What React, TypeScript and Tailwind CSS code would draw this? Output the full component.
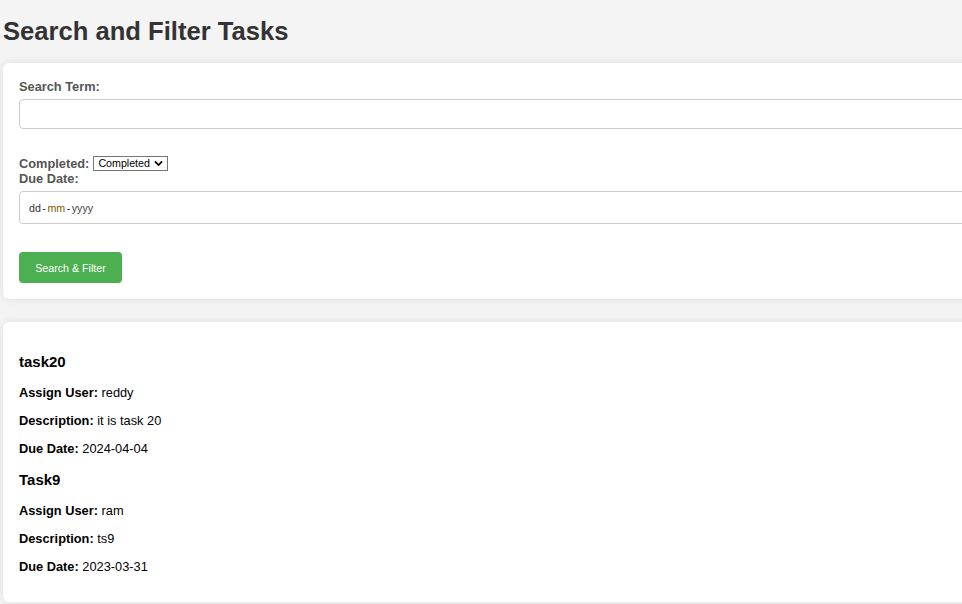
import * as React from "react";

type Task = {
  title: string;
  user: string;
  description: string;
  dueDate: string;
};

const tasks: Task[] = [
  { title: "task20", user: "reddy", description: "it is task 20", dueDate: "2024-04-04" },
  { title: "Task9", user: "ram", description: "ts9", dueDate: "2023-03-31" },
];

function ChevronDown({ className }: { className?: string }) {
  return (
    <svg viewBox="0 0 10 7" className={className} aria-hidden="true">
      <path d="M1 1.2 L5 5.2 L9 1.2" fill="none" stroke="currentColor" strokeWidth="1.9" />
    </svg>
  );
}

export default function App() {
  const [term, setTerm] = React.useState("");
  const [completed, setCompleted] = React.useState("true");

  return (
    <div className="min-h-screen overflow-hidden bg-[#f4f4f4] font-['Liberation_Sans',Arial,sans-serif]">
      <div className="w-[1100px] px-[3px]">
        {/* Title */}
        <h1 className="my-[17px] text-[25.6px] font-bold leading-[29.4px] text-[#333]">
          Search and Filter Tasks
        </h1>

        {/* Filter form card */}
        <form
          className="rounded-[6px] bg-white p-4 shadow-[0_0_8px_rgba(0,0,0,0.1)]"
          onSubmit={(e) => e.preventDefault()}
        >
          <label className="mb-[5px] block text-[12.8px] font-bold leading-[15px] text-[#555]">
            Search Term:
          </label>
          <input
            type="text"
            value={term}
            onChange={(e) => setTerm(e.target.value)}
            className="block h-[30px] w-full rounded-[4px] border border-[#ccc] bg-white px-2 text-[12.8px] outline-none"
          />

          <div className="mt-[26px] flex h-[16px] items-end gap-[4px]">
            <label className="text-[12.8px] font-bold leading-[15px] text-[#555]">Completed:</label>
            <span className="relative inline-flex">
              <select
                value={completed}
                onChange={(e) => setCompleted(e.target.value)}
                className="h-[15px] w-[75px] appearance-none border border-[#767676] bg-white pl-[4px] pr-[16px] text-[10.67px] leading-[13px] text-black"
              >
                <option value="true">Completed</option>
                <option value="false">Not Completed</option>
              </select>
              <ChevronDown className="pointer-events-none absolute right-[5px] top-[4px] h-[7px] w-[9px] text-black" />
            </span>
          </div>

          <label className="mb-[5px] block text-[12.8px] font-bold leading-[15px] text-[#555]">
            Due Date:
          </label>
          <div className="flex h-[33px] w-full items-center rounded-[4px] border border-[#ccc] bg-white pl-[9px] text-[10.67px] text-[#333]">
            <span>dd</span>
            <span className="px-[1.5px]">-</span>
            <span className="text-[#7a5a00]">mm</span>
            <span className="px-[1.5px]">-</span>
            <span className="text-[#444]">yyyy</span>
          </div>

          <button
            type="submit"
            className="mt-[28px] h-[31px] w-[103px] rounded-[4px] bg-[#4caf50] text-[10.67px] text-white"
          >
            Search &amp; Filter
          </button>
        </form>

        {/* Results card */}
        <div className="mt-[23px] rounded-[6px] bg-white px-4 py-4 text-black shadow-[0_0_8px_rgba(0,0,0,0.1)]">
          {tasks.map((t) => (
            <div key={t.title}>
              <h3 className="my-[15px] text-[15px] font-bold leading-[17px]">{t.title}</h3>
              <p className="my-[12.8px] text-[12.8px] leading-[15px]">
                <strong>Assign User:</strong> {t.user}
              </p>
              <p className="my-[12.8px] text-[12.8px] leading-[15px]">
                <strong>Description:</strong> {t.description}
              </p>
              <p className="my-[12.8px] text-[12.8px] leading-[15px]">
                <strong>Due Date:</strong> {t.dueDate}
              </p>
            </div>
          ))}
        </div>
      </div>
    </div>
  );
}
